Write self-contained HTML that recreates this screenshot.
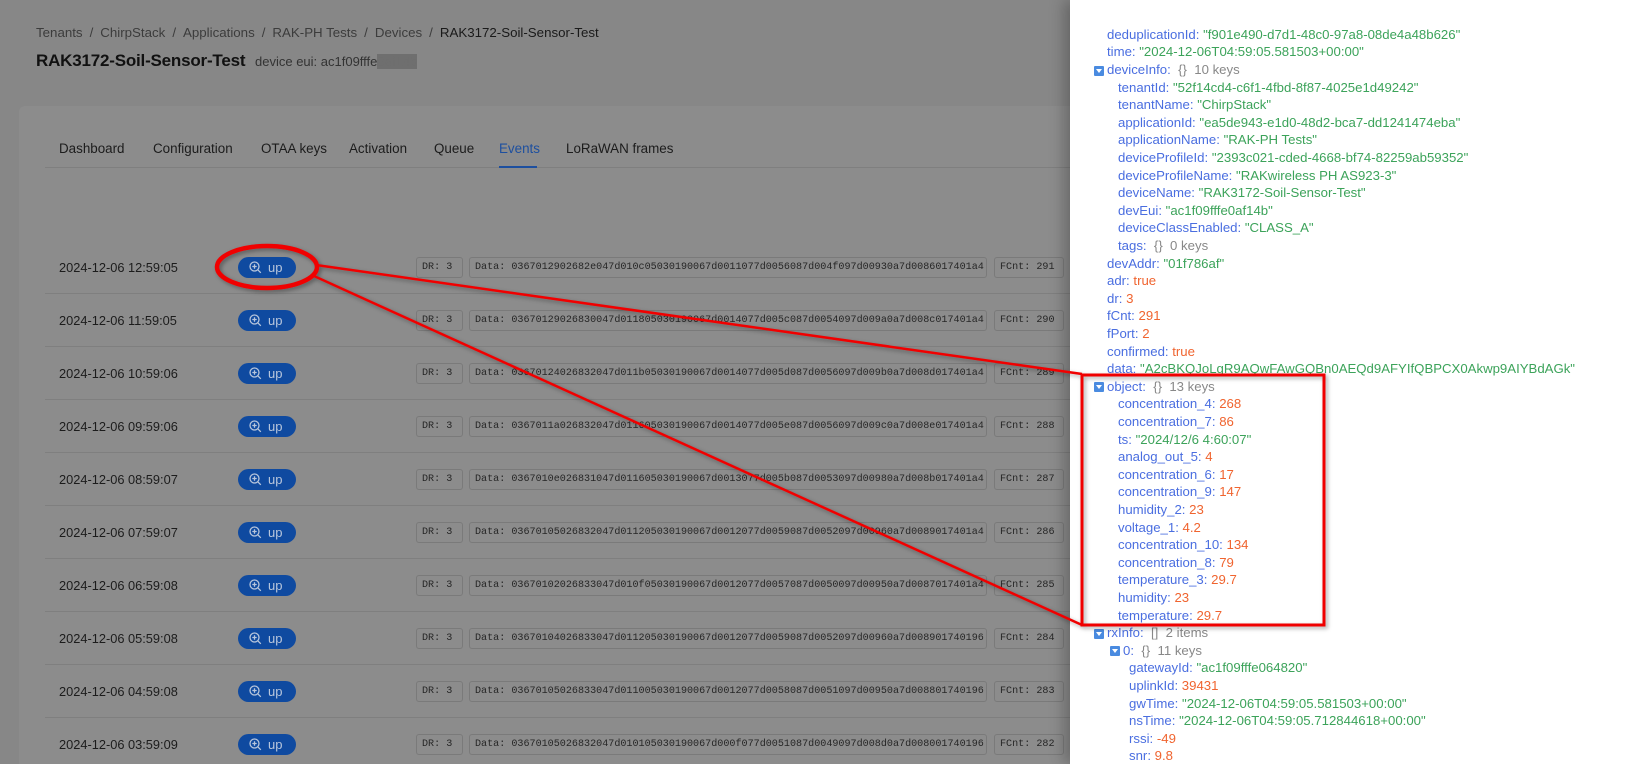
<!DOCTYPE html>
<html><head><meta charset="utf-8"><style>
*{margin:0;padding:0;box-sizing:border-box}
html{width:1628px;height:764px;overflow:hidden}
body{width:1628px;height:764px;overflow:hidden;background:#878787;font-family:"Liberation Sans",sans-serif;position:relative}
.a{position:absolute;white-space:nowrap}
.bc{position:absolute;left:36px;top:25px;font-size:13.3px;color:#3c3c3c;white-space:nowrap}
.bc i{font-style:normal;margin:0 7px}
.card{position:absolute;left:19px;top:106px;width:1200px;height:658px;background:#8c8c8c;border-radius:6px 6px 0 0}
.tab{top:141px;font-size:13.4px;color:#1c1c1c}
.row{position:absolute;left:45px;width:1040px;height:53px;border-bottom:1px solid #7f7f7f}
.ts{left:14px;font-size:12.8px;color:#1c1c1c}
.up{position:absolute;left:193px;width:58px;height:21px;background:#0f4aa0;border-radius:11px;color:#b8c6dc;font-size:13px;line-height:21px;padding-left:30px}
.up svg{position:absolute;left:11px;top:4px}
.chip{position:absolute;height:21px;border:1px solid #7a7a7a;border-radius:3px;font-family:"Liberation Mono",monospace;font-size:10.1px;line-height:19px;color:#262626;padding-left:5px;background:#8c8c8c;overflow:hidden}
.panel{position:absolute;left:1070px;top:0;width:558px;height:764px;background:#fff;box-shadow:-6px 0 14px rgba(0,0,0,.25)}
.j{position:absolute;font-size:13.2px;white-space:nowrap;line-height:17px}
.k{color:#4a6ee0}.s{color:#3ca35a}.n{color:#f0642f}.g{color:#888}
.tg{position:absolute;width:10px;height:10px;background:#4a8be0;border-radius:1px}
.tg:after{content:"";position:absolute;left:2px;top:3px;border-left:3px solid transparent;border-right:3px solid transparent;border-top:4px solid #fff}
</style></head><body>
<div class="bc">Tenants<i>/</i>ChirpStack<i>/</i>Applications<i>/</i>RAK-PH Tests<i>/</i>Devices<i>/</i><span style="color:#1a1a1a">RAK3172-Soil-Sensor-Test</span></div>
<div class="a" style="left:36px;top:51px;font-size:17px;font-weight:bold;color:#111;letter-spacing:-0.2px">RAK3172-Soil-Sensor-Test</div>
<div class="a" style="left:255px;top:54px;font-size:13px;color:#333">device eui: ac1f09fffe<span style="background:#6f6f6f;color:#6f6f6f">0af14b</span></div>
<div class="card"></div>
<div class="a tab" style="left:59px">Dashboard</div>
<div class="a tab" style="left:153px">Configuration</div>
<div class="a tab" style="left:261px">OTAA keys</div>
<div class="a tab" style="left:349px">Activation</div>
<div class="a tab" style="left:434px">Queue</div>
<div class="a tab" style="left:499px;color:#1d4f9f">Events</div>
<div class="a tab" style="left:566px">LoRaWAN frames</div>
<div class="a" style="left:45px;top:167px;width:1030px;height:1px;background:#7f7f7f"></div>
<div class="a" style="left:499px;top:166px;width:38px;height:2px;background:#1d4f9f"></div>
<div id="rows"></div>
<script>
var d=[["12:59:05","0367012902682e047d010c05030190067d0011077d0056087d004f097d00930a7d0086017401a4",291],
["11:59:05","03670129026830047d011805030190067d0014077d005c087d0054097d009a0a7d008c017401a4",290],
["10:59:06","03670124026832047d011b05030190067d0014077d005d087d0056097d009b0a7d008d017401a4",289],
["09:59:06","0367011a026832047d011605030190067d0014077d005e087d0056097d009c0a7d008e017401a4",288],
["08:59:07","0367010e026831047d011605030190067d0013077d005b087d0053097d00980a7d008b017401a4",287],
["07:59:07","03670105026832047d011205030190067d0012077d0059087d0052097d00960a7d0089017401a4",286],
["06:59:08","03670102026833047d010f05030190067d0012077d0057087d0050097d00950a7d0087017401a4",285],
["05:59:08","03670104026833047d011205030190067d0012077d0059087d0052097d00960a7d008901740196",284],
["04:59:08","03670105026833047d011005030190067d0012077d0058087d0051097d00950a7d008801740196",283],
["03:59:09","03670105026832047d010105030190067d000f077d0051087d0049097d008d0a7d008001740196",282]];
var h="";for(var i=0;i<d.length;i++){var c=267+i*53.1;var t=c-26.5;
h+='<div class="row" style="top:'+t+'px"><div class="a ts" style="top:19px">2024-12-06 '+d[i][0]+'</div>'+
'<div class="up" style="top:16px"><svg width="13" height="13" viewBox="0 0 13 13"><circle cx="5.5" cy="5.5" r="4.5" fill="none" stroke="#b8c6dc" stroke-width="1.3"/><path d="M5.5 3.3v4.4M3.3 5.5h4.4M8.8 8.8l3 3" stroke="#b8c6dc" stroke-width="1.3"/></svg>up</div>'+
'<div class="chip" style="left:371px;top:16px;width:47px">DR: 3</div>'+
'<div class="chip" style="left:424px;top:16px;width:518px">Data: '+d[i][1]+'</div>'+
'<div class="chip" style="left:949px;top:16px;width:70px">FCnt: '+d[i][2]+'</div></div>';}
document.getElementById("rows").innerHTML=h;
</script>
<div class="panel">
<div id="js"></div>
</div>
<script>
var L=[[37,0,'<span class="k">deduplicationId:</span> <span class="s">"f901e490-d7d1-48c0-97a8-08de4a48b626"</span>'],
[37,0,'<span class="k">time:</span> <span class="s">"2024-12-06T04:59:05.581503+00:00"</span>'],
[37,1,'<span class="k">deviceInfo:</span>&nbsp; <span class="g">{}&nbsp; 10 keys</span>'],
[48,0,'<span class="k">tenantId:</span> <span class="s">"52f14cd4-c6f1-4fbd-8f87-4025e1d49242"</span>'],
[48,0,'<span class="k">tenantName:</span> <span class="s">"ChirpStack"</span>'],
[48,0,'<span class="k">applicationId:</span> <span class="s">"ea5de943-e1d0-48d2-bca7-dd1241474eba"</span>'],
[48,0,'<span class="k">applicationName:</span> <span class="s">"RAK-PH Tests"</span>'],
[48,0,'<span class="k">deviceProfileId:</span> <span class="s">"2393c021-cded-4668-bf74-82259ab59352"</span>'],
[48,0,'<span class="k">deviceProfileName:</span> <span class="s">"RAKwireless PH AS923-3"</span>'],
[48,0,'<span class="k">deviceName:</span> <span class="s">"RAK3172-Soil-Sensor-Test"</span>'],
[48,0,'<span class="k">devEui:</span> <span class="s">"ac1f09fffe0af14b"</span>'],
[48,0,'<span class="k">deviceClassEnabled:</span> <span class="s">"CLASS_A"</span>'],
[48,0,'<span class="k">tags:</span>&nbsp; <span class="g">{}&nbsp; 0 keys</span>'],
[37,0,'<span class="k">devAddr:</span> <span class="s">"01f786af"</span>'],
[37,0,'<span class="k">adr:</span> <span class="n">true</span>'],
[37,0,'<span class="k">dr:</span> <span class="n">3</span>'],
[37,0,'<span class="k">fCnt:</span> <span class="n">291</span>'],
[37,0,'<span class="k">fPort:</span> <span class="n">2</span>'],
[37,0,'<span class="k">confirmed:</span> <span class="n">true</span>'],
[37,0,'<span class="k">data:</span> <span class="s">"A2cBKQJoLgR9AQwFAwGQBn0AEQd9AFYIfQBPCX0Akwp9AIYBdAGk"</span>'],
[37,1,'<span class="k">object:</span>&nbsp; <span class="g">{}&nbsp; 13 keys</span>']];
var o=[["concentration_4","268"],["concentration_7","86"],["ts",'"2024/12/6 4:60:07"',1],["analog_out_5","4"],["concentration_6","17"],["concentration_9","147"],["humidity_2","23"],["voltage_1","4.2"],["concentration_10","134"],["concentration_8","79"],["temperature_3","29.7"],["humidity","23"],["temperature","29.7"]];
o.forEach(function(p){L.push([48,0,'<span class="k">'+p[0]+':</span> <span class="'+(p[2]?'s':'n')+'">'+p[1]+'</span>'])});
L.push([37,1,'<span class="k">rxInfo:</span>&nbsp; <span class="g">[]&nbsp; 2 items</span>']);
L.push([53,1,'<span class="k">0:</span>&nbsp; <span class="g">{}&nbsp; 11 keys</span>']);
L.push([59,0,'<span class="k">gatewayId:</span> <span class="s">"ac1f09fffe064820"</span>']);
L.push([59,0,'<span class="k">uplinkId:</span> <span class="n">39431</span>']);
L.push([59,0,'<span class="k">gwTime:</span> <span class="s">"2024-12-06T04:59:05.581503+00:00"</span>']);
L.push([59,0,'<span class="k">nsTime:</span> <span class="s">"2024-12-06T04:59:05.712844618+00:00"</span>']);
L.push([59,0,'<span class="k">rssi:</span> <span class="n">-49</span>']);
L.push([59,0,'<span class="k">snr:</span> <span class="n">9.8</span>']);
var s="";for(var i=0;i<L.length;i++){var y=34.3+i*17.6;var x=L[i][0];
if(L[i][1]){s+='<div class="tg" style="left:'+(x-13)+'px;top:'+(y-4)+'px"></div>';}
s+='<div class="j" style="left:'+x+'px;top:'+(y-8.5)+'px">'+L[i][2]+'</div>';}
document.getElementById("js").innerHTML=s;
</script>
<svg class="a" style="left:0;top:0" width="1628" height="764">
<defs><filter id="sh"><feDropShadow dx="2" dy="2" stdDeviation="2" flood-opacity=".35"/></filter></defs>
<g filter="url(#sh)" stroke="#f00000" fill="none">
<ellipse cx="267" cy="267" rx="50" ry="21" stroke-width="4.5"/>
<line x1="316" y1="265" x2="1082" y2="374" stroke-width="2.5"/>
<line x1="314" y1="276" x2="1082" y2="625" stroke-width="2.5"/>
<rect x="1082" y="375" width="242" height="250" stroke-width="3"/>
</g></svg>
</body></html>
